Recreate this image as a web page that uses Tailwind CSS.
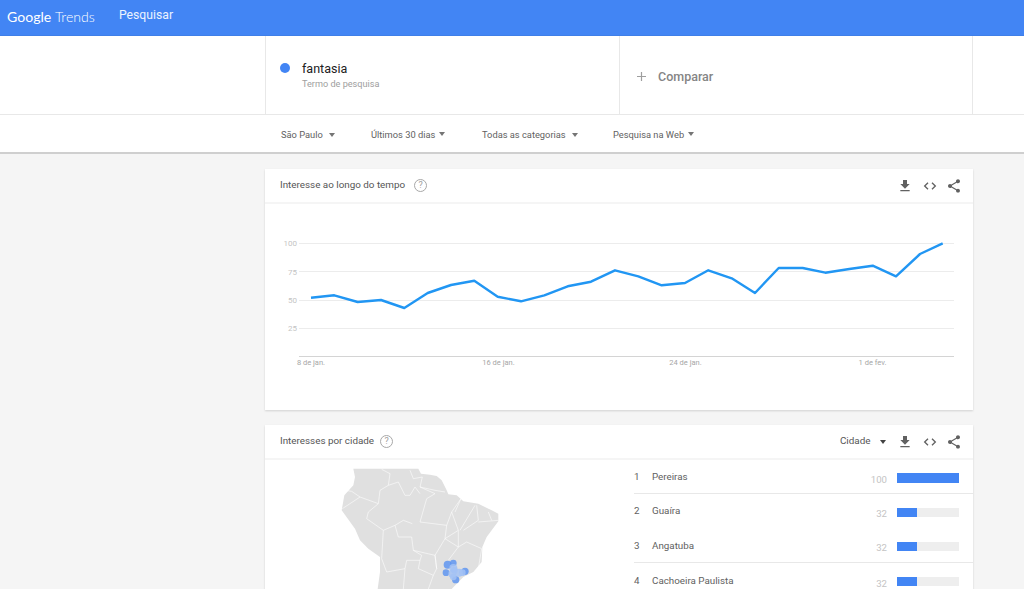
<!DOCTYPE html>
<html lang="pt">
<head>
<meta charset="utf-8">
<title>Google Trends</title>
<script src="https://cdn.jsdelivr.net/npm/@tailwindcss/browser@4"></script>
</head>
<body class="m-0 h-[589px] overflow-hidden bg-[#f5f5f5] font-['Roboto','Liberation_Sans',sans-serif]">
<header class="h-[36px] bg-[#4285f4] flex items-center text-white border-b border-[#3f7fe8]">
  <div class="w-[119px] pl-[7px] font-['Lato','Open_Sans',sans-serif] text-[14.1px] leading-none text-white whitespace-nowrap"><span class="font-normal">Google</span> <span class="font-light">Trends</span></div>
  <div class="text-[12.2px] text-white/90 -mt-[5px]">Pesquisar</div>
</header>

<section class="h-[79px] bg-white border-b border-[#e8e8e8]">
  <div class="ml-[265px] w-[708px] h-full flex border-x border-[#e8e8e8]">
    <div class="w-[354px] border-r border-[#e8e8e8] flex pl-[14px] pt-[27px]">
      <span class="w-[10px] h-[10px] rounded-full bg-[#4285f4]"></span>
      <div class="ml-[12px] -mt-[2px]">
        <div class="text-[12.5px] leading-[16px] text-[#212121]">fantasia</div>
        <div class="text-[9.15px] leading-[12px] mt-[1px] text-[#9e9e9e]">Termo de pesquisa</div>
      </div>
    </div>
    <div class="flex-1 flex items-center pl-[16px] pt-[4px]">
      <svg class="w-[11px] h-[11px] text-[#9e9e9e] -mt-[1px]" viewBox="0 0 11 11" fill="none" stroke="currentColor" stroke-width="1.2"><path d="M5.5 1v9M1 5.5h9"/></svg>
      <span class="ml-[11px] text-[12.5px] font-medium text-[#858585]">Comparar</span>
    </div>
  </div>
</section>

<nav class="h-[39px] bg-white border-b-2 border-[#cfcfcf] pl-[281px] pt-[2px] flex items-center text-[#616161] text-[9.3px]">
  <div class="w-[90px] flex items-center"><span>São Paulo</span><span class="ml-[6.5px] w-0 h-0 border-x-[3.5px] border-x-transparent border-t-[4px] border-t-[#757575]"></span></div>
  <div class="w-[111px] flex items-center"><span>Últimos 30 dias</span><span class="ml-[3.5px] -mt-[2px] w-0 h-0 border-x-[3.5px] border-x-transparent border-t-[4px] border-t-[#757575]"></span></div>
  <div class="w-[131px] flex items-center"><span>Todas as categorias</span><span class="ml-[6.5px] w-0 h-0 border-x-[3.5px] border-x-transparent border-t-[4px] border-t-[#757575]"></span></div>
  <div class="flex items-center"><span>Pesquisa na Web</span><span class="ml-[3.5px] -mt-[2px] w-0 h-0 border-x-[3.5px] border-x-transparent border-t-[4px] border-t-[#757575]"></span></div>
</nav>

<main class="ml-[265px] w-[708px] pt-[15px] flex flex-col gap-[15px]">
  <article class="h-[241px] bg-white shadow-[0_1px_2px_rgba(0,0,0,0.15)]">
    <div class="h-[35px] flex items-center pl-[15px] pr-[11px] border-b-2 border-[#f5f5f5] text-[#555555]">
      <span class="text-[9.85px]">Interesse ao longo do tempo</span>
      <span class="ml-[9px] w-[13px] h-[13px] rounded-full border border-[#a8a8a8] text-[#a0a0a0] text-[9px] leading-[11px] text-center">?</span>
      <div class="ml-auto flex items-center gap-[8.5px] text-[#616161]">
        <svg class="w-[16px] h-[16px]" viewBox="0 0 24 24" fill="currentColor"><path d="M19 9h-4V3H9v6H5l7 7 7-7zM5 18v2h14v-2H5z"/></svg>
        <svg class="w-[16px] h-[16px]" viewBox="0 0 24 24" fill="none" stroke="currentColor" stroke-width="2"><path d="M9 7l-5 5 5 5M15 7l5 5-5 5"/></svg>
        <svg class="w-[16px] h-[16px]" viewBox="0 0 24 24" fill="currentColor"><path d="M18 16.08c-.76 0-1.44.3-1.96.77L8.91 12.7c.05-.23.09-.46.09-.7s-.04-.47-.09-.7l7.05-4.11c.54.5 1.25.81 2.04.81 1.66 0 3-1.34 3-3s-1.34-3-3-3-3 1.34-3 3c0 .24.04.47.09.7L8.04 9.81C7.5 9.31 6.79 9 6 9c-1.66 0-3 1.34-3 3s1.34 3 3 3c.79 0 1.5-.31 2.04-.81l7.12 4.16c-.05.21-.08.43-.08.65 0 1.61 1.31 2.92 2.92 2.92 1.61 0 2.92-1.31 2.92-2.92s-1.31-2.92-2.92-2.92z"/></svg>
      </div>
    </div>
    <svg class="block" width="708" height="206" viewBox="265 204 708 206" font-family="Roboto, Liberation Sans, sans-serif">
      <g stroke="#ececec" stroke-width="1">
        <path d="M299 243.5H954M299 271.5H954M299 300.5H954M299 328.5H954"/>
      </g>
      <path d="M299 356.5H954" stroke="#d4d4d4" stroke-width="1"/>
      <g fill="#c4c4c4" font-size="8" text-anchor="end">
        <text x="297" y="246">100</text><text x="297" y="274.5">75</text><text x="297" y="303">50</text><text x="297" y="331">25</text>
      </g>
      <g fill="#a6a6a6" font-size="7.5" text-anchor="middle">
        <text x="311" y="365">8 de jan.</text><text x="498.5" y="365">16 de jan.</text><text x="685.5" y="365">24 de jan.</text><text x="872.5" y="365">1 de fev.</text>
      </g>
      <polyline fill="none" stroke="#2196f3" stroke-width="2.4" stroke-linejoin="round" points="311,297.7 334.3,295.3 357.7,302 381,300 404.3,308 427.7,293 451,285 474.3,280.7 497.7,296.7 521,301.3 544.3,295.3 567.7,286.3 591,281.7 615,270.3 638.3,276.3 661.7,285.3 685,283 708.3,270.3 731.7,278.3 755,293 778.7,268 802.7,268 825.3,272.7 849.3,269 872.7,265.7 896,276.3 920,254 942.7,243.3"/>
    </svg>
  </article>

  <article class="bg-white shadow-[0_1px_2px_rgba(0,0,0,0.15)]">
    <div class="h-[35px] flex items-center pl-[15px] pr-[11px] border-b-2 border-[#f5f5f5] text-[#555555]">
      <span class="text-[9.85px]">Interesses por cidade</span>
      <span class="ml-[6px] w-[13px] h-[13px] rounded-full border border-[#a8a8a8] text-[#a0a0a0] text-[9px] leading-[11px] text-center">?</span>
      <span class="ml-auto text-[9.9px]">Cidade</span>
      <span class="ml-[9.5px] mr-[11px] w-0 h-0 border-x-[3.5px] border-x-transparent border-t-[4px] border-t-[#424242]"></span>
      <div class="flex items-center gap-[8.5px] text-[#616161]">
        <svg class="w-[16px] h-[16px]" viewBox="0 0 24 24" fill="currentColor"><path d="M19 9h-4V3H9v6H5l7 7 7-7zM5 18v2h14v-2H5z"/></svg>
        <svg class="w-[16px] h-[16px]" viewBox="0 0 24 24" fill="none" stroke="currentColor" stroke-width="2"><path d="M9 7l-5 5 5 5M15 7l5 5-5 5"/></svg>
        <svg class="w-[16px] h-[16px]" viewBox="0 0 24 24" fill="currentColor"><path d="M18 16.08c-.76 0-1.44.3-1.96.77L8.91 12.7c.05-.23.09-.46.09-.7s-.04-.47-.09-.7l7.05-4.11c.54.5 1.25.81 2.04.81 1.66 0 3-1.34 3-3s-1.34-3-3-3-3 1.34-3 3c0 .24.04.47.09.7L8.04 9.81C7.5 9.31 6.79 9 6 9c-1.66 0-3 1.34-3 3s1.34 3 3 3c.79 0 1.5-.31 2.04-.81l7.12 4.16c-.05.21-.08.43-.08.65 0 1.61 1.31 2.92 2.92 2.92 1.61 0 2.92-1.31 2.92-2.92s-1.31-2.92-2.92-2.92z"/></svg>
      </div>
    </div>
    <div class="flex items-start h-[137px]">
      <div class="w-[369px] shrink-0 pl-[70px] pt-[2px]">
      <svg class="block w-[170px] h-[127px]" viewBox="0 0 510 381">
        <path fill="#e0e0e0" d="M55 20H250L258 35L285 38L305 42L320 55L335 85L340 97L365 100L385 118L430 125L470 145L490 155L490 178L470 205L455 225L442 255L440 300L415 330L385 345L370 360L350 381H128L135 330L135 285L100 260L75 235L60 200L20 145L28 100L55 70L60 45Z"/>
        <g fill="none" stroke="#fff" stroke-width="2" stroke-opacity="0.85" stroke-linejoin="round">
          <path d="M140 22L165 35L160 70L135 85L130 125L100 150L95 170L145 205L180 190L205 175L232 185M22 140L45 125L75 105L50 88L30 85M130 125L75 105"/>
          <path d="M160 70L190 60L210 100L225 100L240 75L255 95M225 25L235 50L262 45L255 75L300 85L330 90"/>
          <path d="M255 180L275 110L300 95L255 75M255 180L335 190L350 150L378 110M350 150L370 205L330 230L335 190"/>
          <path d="M180 190L190 225L230 225L235 265L300 280L330 230M378 110L360 150M375 205L420 130M425 130L430 175L385 205M430 180L490 175M460 150L470 175"/>
          <path d="M300 280L305 320M370 205L370 255L395 240L440 260L430 320M330 230L370 255L340 295"/>
          <path d="M145 205L140 290L155 330L210 320M210 320L215 295L255 295L260 280L235 265M210 320L205 381M255 295L250 320L295 340L280 381M300 280L305 320L295 340"/>
        </g>
        <g fill="#5f95f0" fill-opacity="0.85">
          <circle cx="338" cy="308" r="12"/><circle cx="355" cy="303" r="10"/><circle cx="333" cy="332" r="10"/><circle cx="362" cy="353" r="11"/><circle cx="390" cy="328" r="11"/>
        </g>
        <g fill="#a3c2f5" fill-opacity="0.85">
          <circle cx="355" cy="318" r="12"/><circle cx="352" cy="335" r="12"/><circle cx="372" cy="332" r="12"/><circle cx="358" cy="325" r="10"/><circle cx="382" cy="332" r="10"/><circle cx="355" cy="345" r="10"/>
        </g>
      </svg>
      </div>
      <div class="flex-1 text-[#616161] text-[9.8px]">
        <div class="h-[34px] flex pr-[14px] border-b border-[#e8e8e8]">
          <span class="w-[18px] pt-[10px]">1</span><span class="flex-1 pt-[10px]">Pereiras</span><span class="w-[30px] text-right text-[#c4c4c4] pt-[13px] text-[9.6px]">100</span>
          <span class="ml-[10px] mt-[13px] w-[62px] h-[10px] bg-[#eeeeee]"><span class="block h-full w-full bg-[#4285f4]"></span></span>
        </div>
        <div class="h-[34px] flex pr-[14px]">
          <span class="w-[18px] pt-[10px]">2</span><span class="flex-1 pt-[10px]">Guaíra</span><span class="w-[30px] text-right text-[#c4c4c4] pt-[13px] text-[9.6px]">32</span>
          <span class="ml-[10px] mt-[14px] w-[62px] h-[9px] bg-[#eeeeee]"><span class="block h-full w-[20px] bg-[#4285f4]"></span></span>
        </div>
        <div class="h-[35px] flex pr-[14px] border-b border-[#e8e8e8]">
          <span class="w-[18px] pt-[11px]">3</span><span class="flex-1 pt-[11px]">Angatuba</span><span class="w-[30px] text-right text-[#c4c4c4] pt-[13px] text-[9.6px]">32</span>
          <span class="ml-[10px] mt-[14px] w-[62px] h-[9px] bg-[#eeeeee]"><span class="block h-full w-[20px] bg-[#4285f4]"></span></span>
        </div>
        <div class="h-[34px] flex pr-[14px]">
          <span class="w-[18px] pt-[11px]">4</span><span class="flex-1 pt-[11px]">Cachoeira Paulista</span><span class="w-[30px] text-right text-[#c4c4c4] pt-[14px] text-[9.6px]">32</span>
          <span class="ml-[10px] mt-[14px] w-[62px] h-[9px] bg-[#eeeeee]"><span class="block h-full w-[20px] bg-[#4285f4]"></span></span>
        </div>
      </div>
    </div>
  </article>
</main>
</body>
</html>
